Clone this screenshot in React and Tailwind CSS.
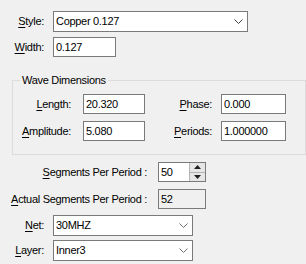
import React from "react";

function U({ children }) {
  return <span className="underline underline-offset-[2px] decoration-[1px]">{children}</span>;
}

function Chevron({ dark }) {
  return (
    <svg width="9" height="5" viewBox="0 0 9 5" className="shrink-0">
      <path d="M0.5 0.5 L4.5 4.5 L8.5 0.5" fill="none" stroke={dark ? "#404040" : "#707070"} strokeWidth="1" />
    </svg>
  );
}

function Combo({ value, w, dark }) {
  return (
    <div className={`${w} h-[21px] bg-white border border-[#7a7a7a] flex items-center pl-[2px] pr-[4px]`}>
      <span className="flex-1 leading-none">{value}</span>
      <Chevron dark={dark} />
    </div>
  );
}

function TextBox({ value, w, ro }) {
  return (
    <div className={`${w} h-[20px] border border-[#7a7a7a] flex items-center pl-[2px] ${ro ? "bg-[#f0f0f0]" : "bg-white"}`}>
      <span className="leading-none">{value}</span>
    </div>
  );
}

export default function App() {
  return (
    <div className="w-[306px] h-[264px] bg-[#f0f0f0] overflow-hidden font-['Liberation_Sans',Arial,sans-serif] text-[11px] tracking-[-0.3px] text-black">
      {/* Style */}
      <div className="flex items-center pt-[11px]">
        <div className="w-[44px] text-right"><U>S</U>tyle:</div>
        <div className="ml-[9px]">
          <Combo value="Copper 0.127" w="w-[195px]" dark />
        </div>
      </div>
      {/* Width */}
      <div className="flex items-center mt-[5px]">
        <div className="w-[44px] text-right"><U>W</U>idth:</div>
        <div className="ml-[9px]">
          <TextBox value="0.127" w="w-[63px]" />
        </div>
      </div>

      {/* Group */}
      <div className="relative ml-[12px] mt-[23px] w-[294px] h-[75px] border border-[#dcdcdc]">
        <div className="absolute left-[7px] top-[-8px] px-[2px] bg-[#f0f0f0] leading-[14px]">Wave Dimensions</div>
        <div className="flex items-center mt-[13px]">
          <div className="w-[58px] text-right"><U>L</U>ength:</div>
          <div className="ml-[12px]"><TextBox value="20.320" w="w-[62px]" /></div>
          <div className="w-[67px] text-right"><U>P</U>hase:</div>
          <div className="ml-[9px]"><TextBox value="0.000" w="w-[65px]" /></div>
        </div>
        <div className="flex items-center mt-[7px]">
          <div className="w-[58px] text-right"><U>A</U>mplitude:</div>
          <div className="ml-[12px]"><TextBox value="5.080" w="w-[62px]" /></div>
          <div className="w-[67px] text-right"><U>P</U>eriods:</div>
          <div className="ml-[9px]"><TextBox value="1.000000" w="w-[65px]" /></div>
        </div>
      </div>

      {/* Segments */}
      <div className="flex items-center mt-[7px]">
        <div className="w-[147px] text-right"><U>S</U>egments Per Period :</div>
        <div className="ml-[11px] w-[48px] h-[20px] border border-[#7a7a7a] bg-white flex">
          <div className="flex-1 flex items-center pl-[2px] leading-none">50</div>
          <div className="w-[16px] flex flex-col bg-[#e6e6e6] border-l border-[#b4b4b4]">
            <div className="flex-1 flex items-center justify-center border-b border-[#b4b4b4]">
              <svg width="7" height="4" viewBox="0 0 7 4"><path d="M3.5 0 L7 4 L0 4 Z" fill="#202020" /></svg>
            </div>
            <div className="flex-1 flex items-center justify-center">
              <svg width="7" height="4" viewBox="0 0 7 4"><path d="M0 0 L7 0 L3.5 4 Z" fill="#202020" /></svg>
            </div>
          </div>
        </div>
      </div>

      {/* Actual */}
      <div className="flex items-center mt-[7px]">
        <div className="w-[147px] text-right"><U>A</U>ctual Segments Per Period :</div>
        <div className="ml-[11px]"><TextBox value="52" w="w-[48px]" ro /></div>
      </div>

      {/* Net */}
      <div className="flex items-center mt-[6px]">
        <div className="w-[44px] text-right"><U>N</U>et:</div>
        <div className="ml-[9px]"><Combo value="30MHZ" w="w-[140px]" /></div>
      </div>
      {/* Layer */}
      <div className="flex items-center mt-[4px]">
        <div className="w-[44px] text-right"><U>L</U>ayer:</div>
        <div className="ml-[9px]"><Combo value="Inner3" w="w-[140px]" /></div>
      </div>
    </div>
  );
}
